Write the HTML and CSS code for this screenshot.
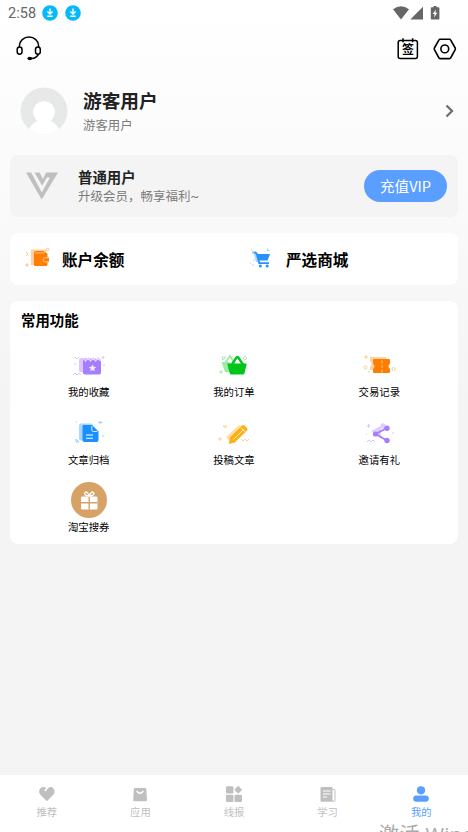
FILE: index.html
```html
<!DOCTYPE html>
<html lang="zh-CN">
<head>
<meta charset="utf-8">
<meta name="viewport" content="width=device-width, initial-scale=1">
<title>我的</title>
<link rel="stylesheet" href="styles.css">
</head>
<body>
<div class="app">
  <div class="status">
    <span class="time">2:58</span>
    <svg class="dl" viewBox="0 0 16 16"><circle cx="8" cy="8" r="7.8" fill="#06b9fb"/><path d="M8 3.6v5M5.4 6.5 8 9l2.6-2.5M5.3 11.3h5.4" fill="none" stroke="#fff" stroke-width="1.4"/></svg>
    <svg class="dl" viewBox="0 0 16 16"><circle cx="8" cy="8" r="7.8" fill="#06b9fb"/><path d="M8 3.6v5M5.4 6.5 8 9l2.6-2.5M5.3 11.3h5.4" fill="none" stroke="#fff" stroke-width="1.4"/></svg>
    <svg class="signals" viewBox="0 0 47 14" fill="#666"><path d="M0 3.3Q8 -2.6 16 3.3L8 13.5z"/><path d="M30 .8v12.7H17.3z"/><path d="M38.6 1.2h2V0h3v1.2h2a.8.8 0 0 1 .8.8v10.700a.8.8 0 0 1-.8.8h-7a.8.8 0 0 1-.8-.8V2a.8.8 0 0 1 .8-.8z"/><path d="M43 3.500 39.600 8h2l-.6 3.500 3.400-4.700h-2z" fill="#fff"/></svg>
  </div>
  <header class="toolbar">
    <svg class="headset" viewBox="0 0 26 25" fill="none" stroke="#000" stroke-width="1.500"><path d="M3.400 11.500V9.800a9.600 8.800 0 0 1 19.200 0v1.700"/><rect x="1.200" y="11" width="4.800" height="7.200" rx="2.400"/><rect x="19.500" y="11" width="4.800" height="7.200" rx="2.400"/><path d="M22.400 18c-.8 3-3.400 4.300-7.400 4.600"/><ellipse cx="13.800" cy="22.500" rx="2" ry="1.200" fill="#000" stroke-width="1"/></svg>
    <div class="tools">
      <span class="sign"><svg viewBox="0 0 22 22" fill="none" stroke="#000" stroke-width="1.500"><rect x="1.200" y="2.600" width="19.200" height="18" rx="2"/><path d="M6 .3v4M15.600 .3v4"/></svg><b>签</b></span>
      <svg class="gear" viewBox="0 0 24 22" fill="none" stroke="#000" stroke-width="1.600" stroke-linejoin="round"><path d="M7 1.200h9.600q.7 0 1 .6l4.600 8.200q.4.900 0 1.700l-4.600 8.300q-.3.600-1 .6H7q-.7 0-1-.6L1.400 11.700q-.4-.8 0-1.700L6 1.800q.3-.6 1-.6z"/><circle cx="11.800" cy="10.900" r="3.900"/></svg>
    </div>
  </header>
  <section class="profile">
    <svg class="avatar" viewBox="0 0 48 48"><defs><clipPath id="round"><circle cx="24" cy="24" r="23.500"/></clipPath></defs><g clip-path="url(#round)"><path d="M0 0h48v48H0z" fill="#e7e9e8"/><circle cx="24" cy="25" r="10.800" fill="#fff"/><path d="M8 48c0-8 5.500-13 11-15h10c5.500 2 11 7 11 15z" fill="#fff"/></g></svg>
    <div class="who"><h1>游客用户</h1><p>游客用户</p></div>
    <svg class="arrow" viewBox="0 0 10 14"><path d="M1.500 1.500 7 7l-5.500 5.500" fill="none" stroke="#707070" stroke-width="2.300"/></svg>
  </section>
  <section class="vip">
    <svg class="vlogo" viewBox="0 0 32 28" fill="#bfbfbf"><path d="M0 .5h5.200L15.800 20.500 24 5.500h-3.200l-4.600 8.300L8.500 .5h5l3.500 6.500L20 .5h12L15.700 27.500z"/></svg>
    <div class="plan"><h2>普通用户</h2><p>升级会员，畅享福利~</p></div>
    <button class="pay">充值VIP</button>
  </section>
  <section class="links">
    <div class="link">
      <svg viewBox="0 0 28 24"><path d="M7 2.500h15V6H12v12H7z" fill="#ffd1a3"/><path d="M10 5.500q0-1.500 1.500-1.500H20v1.500h1.500q2 0 2 2v10.300q0 1.200-1.200 1.200H11q-1 0-1-1z" fill="#ff7e00"/><path d="M11 6h9" stroke="#ffc080"/><path d="M25 10.800h-4a2 2 0 0 0 0 4h4" fill="#ff7e00" stroke="#ffc48d"/><g fill="none" stroke="#ffc48d"><path d="m2 5 2 2-2 2M3 16v4M1 18h4"/><circle cx="23.500" cy="2.500" r="1.300"/></g></svg>
      <span>账户余额</span>
    </div>
    <div class="link">
      <svg viewBox="0 0 28 24"><path d="M4 4h4l2 11H8L6 7H4zM19 4V1l3 3z" fill="#a9d5ff"/><path d="M5.500 5h3l1.400 2H22l-2.400 6.500h-8l.5 1.800H21V17H10.500L8 7.500z" fill="#2692ff"/><circle cx="12.300" cy="19" r="1.500" fill="#2692ff"/><circle cx="19.200" cy="19" r="1.500" fill="#2692ff"/><path d="M3 3h1M2 16h1M5 13h2M4 18h2" stroke="#a9d5ff"/></svg>
      <span>严选商城</span>
    </div>
  </section>
  <section class="common">
    <h2>常用功能</h2>
    <div class="grid">
      <div class="item"><svg viewBox="0 0 36 36"><rect x="8" y="11" width="17" height="14" rx="1.500" fill="#dbc7ff"/><rect x="12" y="12" width="18" height="15.500" rx="1.800" fill="#a77dff"/><path d="m12.500 11 2 3 3-3 2 3 3-3 2 3 3-3 2 3" fill="none" stroke="#e3d3ff" stroke-width="1.400"/><path d="m21.500 17.500 1.100 2.300 2.500.3-1.900 1.700.5 2.500-2.200-1.300-2.200 1.300.5-2.500-1.900-1.700 2.500-.3z" fill="#f6edff"/><path d="m4 10 2 2 2-2M2 28l2-2 2 2 2-2 2 2M32 9v3M30.500 10.500h3M33 17v2M4 16v2" fill="none" stroke="#dac5fb"/></svg><span>我的收藏</span></div>
      <div class="item"><svg viewBox="0 0 36 36"><path d="m8.500 17 5.500-8 5 8" fill="none" stroke="#9feba5" stroke-width="2"/><path d="M5.500 15H14l4 10H9z" fill="#9feba5"/><path d="m15.500 18 5-7.500q.9-1 1.800 0l5 7.500" fill="none" stroke="#00c51b" stroke-width="2.300"/><path d="M12 16.500h18q.8 0 .6.900l-2.200 9.200q-.3.900-1.200.9H15q-1 0-1.200-.9l-2.400-9.200q-.2-.9.600-.9z" fill="#00c51b"/><path d="M6 10h4l-3 3zM5 23v4M3 25h4M27 11l2-2 2 2-2 2z" fill="none" stroke="#a7e9ad"/></svg><span>我的订单</span></div>
      <div class="item"><svg viewBox="0 0 36 36"><path d="M9 10h16v13H9v-3q3-3 0-6z" fill="#ffd1a3"/><path d="M14 12h14q1 0 1 1v3.500q-3 2.800 0 5.500V25q0 1-1 1H13q-1 0-1-1v-3q3-2.700 0-5.500V13q0-1 1-1z" fill="#ff7e00"/><path d="M21 13.500v12" stroke="#ffb469" stroke-width="1.300" stroke-dasharray="3 1.500"/><path d="M5 8v4M3 10h4M7 25h2" fill="none" stroke="#ffcb98"/><circle cx="4.500" cy="20.500" r="1.500" fill="none" stroke="#ffcb98"/><circle cx="32.500" cy="22" r="1.500" fill="none" stroke="#ffcb98"/></svg><span>交易记录</span></div>
      <div class="item"><svg viewBox="0 0 36 36"><rect x="8" y="8.500" width="14" height="17" rx="2" fill="#a9d5ff"/><path d="M12.500 10h8.500l6.500 6.500V25q0 2-2 2h-12q-2 0-2-2V12q0-2 1-2z" fill="#1990ff"/><path d="M20.800 11v4q0 1.500 1.500 1.500h4" fill="none" stroke="#d5eaff" stroke-width="1"/><path d="M15 20h7M15 23.300h7" stroke="#fff" stroke-width="1.100"/><path d="M29 6v3M27.500 7.500h4M5 24v3h3zM5 7h1M31 21h2" fill="none" stroke="#9acdff"/></svg><span>文章归档</span></div>
      <div class="item"><svg viewBox="0 0 36 36"><path d="M10 22 23 10l4 2-13 15z" fill="#ffe0a3"/><path d="m14 22.500 12-12q1.300-1 2.600 0l2.400 2.400q1 1.200 0 2.500L18.800 27.500l-5.800 1.500z" fill="#ffae16"/><path d="M17.500 24.500 28 14M24.800 12.500l4.500 4.500" fill="none" stroke="#fff0cd" stroke-width="1"/><path d="M7 11h4l-2 2zM4 22v4M2 24h4M25 24l2 2 2-2 2 2 2-2" fill="none" stroke="#ffd38c"/></svg><span>投稿文章</span></div>
      <div class="item"><svg viewBox="0 0 36 36"><path d="m10 16 10-5v11z" fill="#dfceff"/><circle cx="22" cy="11" r="2.700" fill="#dfceff"/><path d="m26 13-11.500 6L26 25.500" fill="none" stroke="#a77dff" stroke-width="1.900"/><circle cx="26" cy="13.200" r="2.700" fill="#a77dff"/><circle cx="14.500" cy="19" r="2.600" fill="#a77dff"/><circle cx="26" cy="25.500" r="2.700" fill="#a77dff"/><path d="M7.500 9v4M5.500 11h4M6 27l2-2 2 2 2-2 2 2M31 18h2M5 19h1" fill="none" stroke="#dac5fb"/></svg><span>邀请有礼</span></div>
      <div class="item"><svg viewBox="0 0 36 36"><circle cx="18" cy="18" r="18" fill="#d6a266"/><rect x="10" y="14.500" width="16.500" height="13" rx="1.300" fill="#fff"/><path d="M18.200 14.500v13M10 20.700h16.500" stroke="#d6a266" stroke-width="1.400"/><path d="M18.200 14q-5-.3-4.600-2.800.8-2.200 3-.3 1.200 1.200 1.600 3.100.4-1.900 1.700-3.100 2.200-1.900 3 .3.400 2.500-4.700 2.800z" fill="none" stroke="#fff" stroke-width="1.300"/></svg><span>淘宝搜券</span></div>
    </div>
  </section>
  <nav class="tabs">
    <div class="tab"><svg viewBox="0 0 18 18"><path d="M8.800 16.300 2.200 9.500Q0 6.500 2.200 3.400 5.500.8 8.200 3L6.200 5.500l1.300 1L10 3.200q3-2.300 5.500.2 2.200 3.100 0 6.100z"/></svg><span>推荐</span></div>
    <div class="tab"><svg viewBox="0 0 18 18"><path d="M4 3h10q1.200 0 1.300 1l.7 11q0 1.200-1.300 1.200H3.500q-1.300 0-1.300-1.200L2.800 4Q2.900 3 4 3z"/><path d="M5.600 6Q9 10.500 12.400 6" fill="none" stroke="#fff" stroke-width="1.300"/></svg><span>应用</span></div>
    <div class="tab"><svg viewBox="0 0 18 18"><rect x="1" y="1.200" width="7.400" height="7.400" rx="1.300"/><path d="m13.200 .8 3.900 4-3.900 4-3.900-4z"/><rect x="1" y="9.700" width="7.400" height="7.400" rx="1.300"/><rect x="9.500" y="9.700" width="7.500" height="7.400" rx="1.300"/></svg><span>线报</span></div>
    <div class="tab"><svg viewBox="0 0 18 18"><rect x="1.500" y="2" width="12" height="14.700" rx="1.200"/><path d="M13.500 4.500h1.700q.8 0 .8.800v9.900q0 1-1 1h-2" fill="none" stroke="#bfbfbf" stroke-width="1"/><path d="M4 6h7.500M4 9h7.500M4 12h4" stroke="#fff" stroke-width="1.200"/></svg><span>学习</span></div>
    <div class="tab on"><svg viewBox="0 0 18 18"><circle cx="9" cy="5.300" r="4.100"/><rect x="1.200" y="10.500" width="15.600" height="6.300" rx="3"/></svg><span>我的</span></div>
  </nav>
  <div class="watermark">激活 Windows</div>
</div>
</body>
</html>
```
FILE: styles.css
```css
* { box-sizing: border-box; margin: 0; padding: 0; }
body { font-family: Roboto, "Noto Sans CJK SC", sans-serif; background: #f4f4f4; color: #000; }
svg { display: block; flex: none; }
.app {
  position: relative;
  display: flex;
  flex-direction: column;
  width: 468px;
  height: 832px;
  overflow: hidden;
  background: linear-gradient(#fff 0, #fcfcfc 120px, #f7f7f7 300px, #f4f4f4 420px);
}
.status { display: flex; align-items: center; height: 25px; padding: 0 28px 0 8px; color: #666; }
.time { width: 34px; padding-top: 2px; font-size: 14.500px; letter-spacing: .1px; }
.dl { width: 16px; height: 16px; margin-right: 7px; }
.signals { width: 47px; height: 14px; margin-left: auto; }
.toolbar { display: flex; align-items: center; justify-content: space-between; height: 47px; padding: 0 11px 0 16px; }
.headset { width: 26px; height: 25px; }
.tools { display: flex; align-items: center; gap: 14px; }
.sign { display: grid; width: 22px; height: 22px; }
.sign svg, .sign b { grid-area: 1 / 1; }
.sign b { padding-top: 4px; font-size: 12px; line-height: 17px; text-align: center; }
.gear { width: 24px; height: 22px; }
.profile { display: flex; align-items: center; height: 83px; padding: 0 13px 6px 20px; }
.avatar { width: 48px; height: 48px; }
.who { flex: 1; margin-left: 15px; padding-top: 3px; }
.who h1 { font-size: 18.700px; line-height: 26px; color: #222; }
.who p { font-size: 12.400px; line-height: 21px; color: #7b7b7b; }
.arrow { width: 10px; height: 14px; }
.vip { display: flex; align-items: center; height: 62px; margin: 0 10px; padding: 0 11px 0 16px; border-radius: 8px; background: #f4f4f4; }
.vlogo { width: 32px; height: 28px; }
.plan { flex: 1; margin-left: 20px; padding-top: 2px; }
.plan h2 { font-size: 14.400px; line-height: 19px; color: #222; }
.plan p { font-size: 12.500px; line-height: 18px; color: #7b7b7b; }
.pay { width: 83px; height: 32px; border: 0; border-radius: 16px; background: #5a9fff; color: #fff; font-family: "Noto Sans CJK SC", sans-serif; font-size: 14.600px; line-height: 30px; }
.links { display: grid; grid-template-columns: 1fr 1fr; height: 52px; margin: 16px 10px 0; border-radius: 8px; background: #fff; }
.link { display: flex; align-items: center; gap: 10px; padding-left: 14px; font-size: 15.600px; font-weight: bold; }
.link svg { width: 28px; height: 24px; }
.common { height: 243px; margin: 16px 10px 0; padding: 9px 6px 0; border-radius: 8px; background: #fff; }
.common h2 { padding-left: 5px; font-size: 14.400px; line-height: 24px; }
.grid { display: grid; grid-template-columns: repeat(3, 1fr); grid-auto-rows: 67.500px; margin-top: 13px; }
.item { display: flex; flex-direction: column; align-items: center; }
.item svg { width: 36px; height: 36px; }
.item span { margin-top: 2px; font-size: 10.400px; line-height: 16px; }
.tabs { display: flex; height: 57px; margin-top: auto; padding-top: 10px; background: #fff; color: #bfbfbf; }
.tab { flex: 1; display: flex; flex-direction: column; align-items: center; }
.tab svg { width: 18px; height: 18px; fill: currentColor; }
.tab span { margin-top: 2px; font-size: 10.300px; line-height: 16px; }
.on { color: #5a9fff; }
.watermark { position: absolute; left: 379px; top: 820px; font-family: "Open Sans", "Noto Sans CJK SC", sans-serif; font-size: 20px; line-height: 30px; letter-spacing: .4px; color: #aaa; white-space: nowrap; }
```
